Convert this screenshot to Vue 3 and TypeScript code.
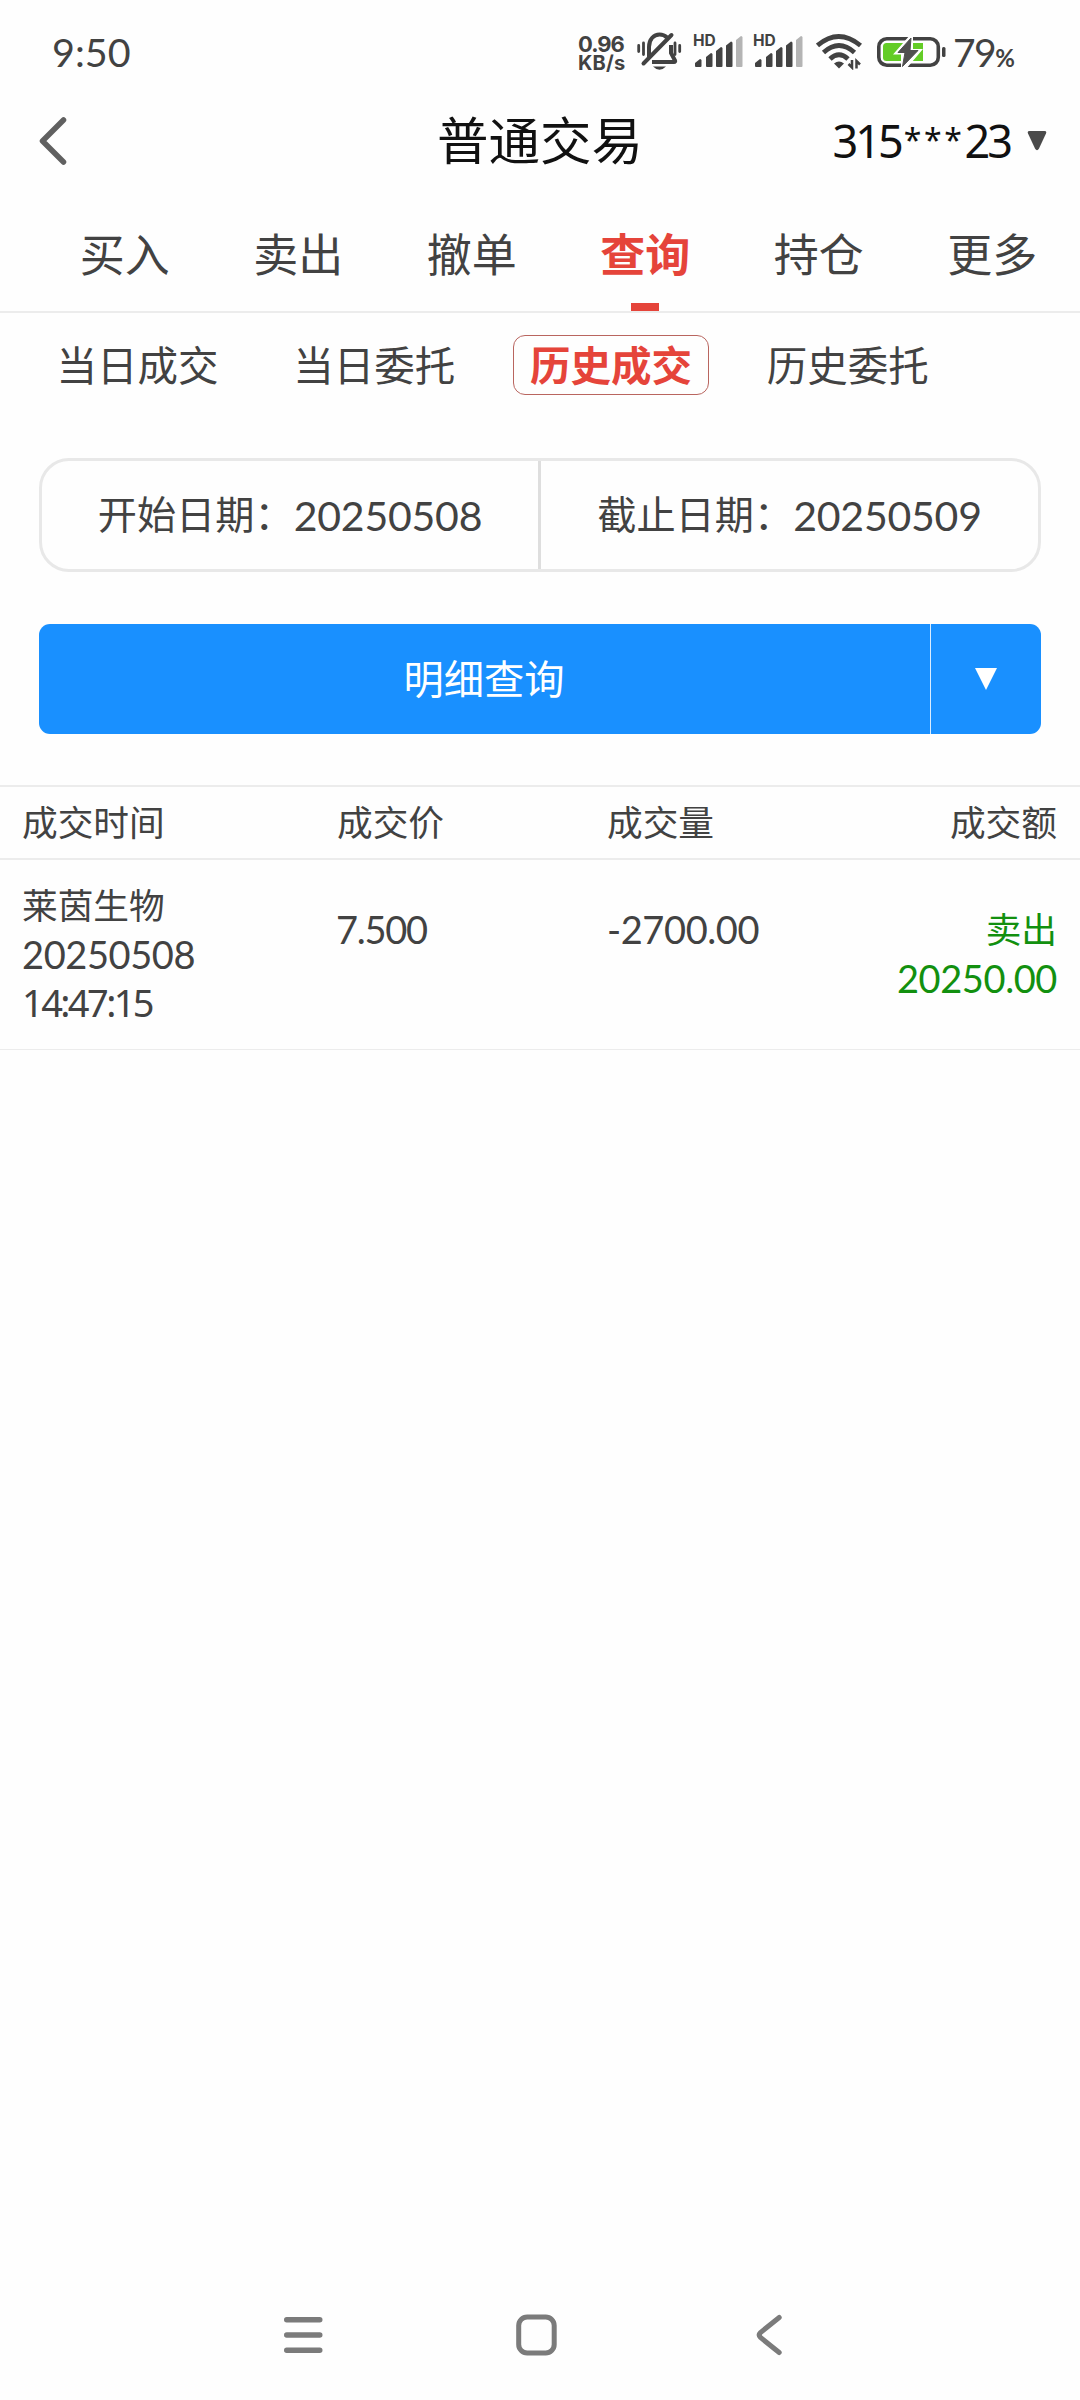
<script setup lang="ts">
interface Tab {
  label: string
  active?: boolean
}

const mainTabs: Tab[] = [
  { label: '买入' },
  { label: '卖出' },
  { label: '撤单' },
  { label: '查询', active: true },
  { label: '持仓' },
  { label: '更多' },
]

const subTabs: Tab[] = [
  { label: '当日成交' },
  { label: '当日委托' },
  { label: '历史成交', active: true },
  { label: '历史委托' },
]

const dates = [
  { label: '开始日期：', value: '20250508' },
  { label: '截止日期：', value: '20250509' },
]

const trades = [
  {
    name: '莱茵生物',
    date: '20250508',
    time: '14:47:15',
    price: '7.500',
    volume: '-2700.00',
    side: '卖出',
    amount: '20250.00',
  },
]

const bars = [
  { x: 2, top: 23, cut: 4 },
  { x: 13, top: 17, cut: 4 },
  { x: 23, top: 11, cut: 4 },
  { x: 33, top: 5.5, cut: 4 },
  { x: 43, top: 0, cut: 4 },
]

function barPath(b: { x: number; top: number; cut: number }): string {
  const right = b.x + 6.5
  return `M${b.x} ${b.top + b.cut}L${right - 1.5} ${b.top}Q${right} ${b.top} ${right} ${b.top + 1.5}V30Q${right} 31 ${right - 1} 31H${b.x + 1}Q${b.x} 31 ${b.x} 30Z`
}
</script>

<template>
  <div class="screen">
    <header class="status">
      <span class="clock">9:50</span>
      <span class="speed"><span class="rate">0.96</span><span class="unit">KB/s</span></span>
      <svg class="bell" width="56" height="40" viewBox="0 0 56 40" fill="none" stroke="#424242">
        <path d="M12 25V15C12 7 17 2.500 22.500 2.500C25.500 2.500 28 3.500 30 5.500" stroke-width="4" />
        <path d="M34 13V21L38 28.500C38.500 29.500 38 30 37 30H15" stroke-width="4" />
        <path d="M34.500 3L6.500 31.500" stroke-width="4" stroke-linecap="round" />
        <path d="M16 34.500H29Q22.500 41 16 34.500Z" fill="#424242" stroke="none" />
        <path d="M1.700 13.500V19.500M6.500 11V22.500M38 11V22.500M42.700 13.500V19.500" stroke-width="2.800" stroke-linecap="round" />
      </svg>
      <span v-for="n in 2" :key="n" class="signal">
        <svg width="52" height="32" viewBox="0 0 52 32">
          <path
            v-for="(b, i) in bars"
            :key="i"
            :d="barPath(b)"
            :fill="i === 4 ? '#b4b4b4' : '#424242'"
          />
        </svg>
        <span class="hd">HD</span>
      </span>
      <svg class="wifi" width="61" height="36" viewBox="0 0 61 36" fill="none" stroke="#424242" stroke-width="4.800">
        <path d="M1.500 11.500Q22.500 -6.500 44.500 11.500" />
        <path d="M7.500 18.500Q23 4.500 38.500 18.500" />
        <path d="M14 25Q23 16.500 32 25" />
        <path d="M18 29.500Q23 25.500 28 29.500L23 34.500Z" fill="#424242" stroke="none" />
        <path d="M36 26V33.500L32.500 30M40.500 34.500V27L44 30.500" stroke-width="2.500" />
      </svg>
      <svg class="battery" width="76" height="34" viewBox="0 0 76 34">
        <rect x="1.800" y="3.800" width="59.500" height="26.400" rx="8" fill="none" stroke="#424242" stroke-width="3.600" />
        <path d="M9.500 8H46V26H9.500Q6 26 6 22.500V11.500Q6 8 9.500 8Z" fill="#63cc26" />
        <path d="M33 0L16 19.500H24L24 34H29L46 14H36V0Z" fill="#fff" />
        <path d="M34 3L21 17.500H28L25.500 31.500L41 15.500H33Z" fill="#505050" stroke="#505050" stroke-width="1" />
        <rect x="65" y="12" width="3.500" height="10" rx="1.500" fill="#424242" />
      </svg>
      <span class="percent">79<small>%</small></span>
    </header>

    <div class="titlebar">
      <svg class="back" width="30" height="52" viewBox="0 0 30 52" fill="none">
        <path d="M24.500 5L3.500 26L24.500 47" stroke="#606060" stroke-width="5.500" stroke-linecap="round" stroke-linejoin="round" />
      </svg>
      <h1>普通交易</h1>
      <div class="account">
        <span class="account-no">315<i>***</i>23</span>
        <svg width="20" height="20" viewBox="0 0 20 20">
          <path d="M2.500 0H17.500Q20 0 19 2.500L12 17.500Q10 21 8 17.500L1 2.500Q0 0 2.500 0Z" fill="#4a4a4a" />
        </svg>
      </div>
    </div>

    <nav class="tabs">
      <div v-for="t in mainTabs" :key="t.label" class="tab" :class="{ active: t.active }">
        <span>{{ t.label }}</span>
      </div>
    </nav>

    <nav class="subtabs">
      <div v-for="t in subTabs" :key="t.label" class="subtab" :class="{ active: t.active }">
        <span>{{ t.label }}</span>
      </div>
    </nav>

    <section class="dates">
      <div v-for="d in dates" :key="d.label" class="date">
        <span class="date-label">{{ d.label }}</span><span class="date-value">{{ d.value }}</span>
      </div>
    </section>

    <section class="query">
      <div class="query-main">明细查询</div>
      <div class="query-more">
        <svg width="22" height="22" viewBox="0 0 22 22"><path d="M0 0H22L11 22Z" fill="#fff" /></svg>
      </div>
    </section>

    <section class="table">
      <div class="row head">
        <span>成交时间</span><span>成交价</span><span>成交量</span><span class="end">成交额</span>
      </div>
      <div v-for="r in trades" :key="r.time" class="row body">
        <div class="cell">
          <span>{{ r.name }}</span>
          <span class="num">{{ r.date }}</span>
          <span class="num time">{{ r.time }}</span>
        </div>
        <div class="cell lower"><span class="num price">{{ r.price }}</span></div>
        <div class="cell lower"><span class="num volume">{{ r.volume }}</span></div>
        <div class="cell lower end sell">
          <span>{{ r.side }}</span>
          <span class="num amount">{{ r.amount }}</span>
        </div>
      </div>
    </section>

    <footer class="navbar">
      <svg width="40" height="44" viewBox="0 0 40 44" fill="none" stroke="#7b7b7b" stroke-width="5.400" stroke-linecap="round">
        <path d="M2.700 6.700H35.800M2.700 22H35.800M2.700 37.300H35.800" />
      </svg>
      <svg width="42" height="44" viewBox="0 0 42 44" fill="none" stroke="#7b7b7b" stroke-width="5">
        <rect x="2.700" y="4" width="35.500" height="36" rx="8.500" />
      </svg>
      <svg width="28" height="44" viewBox="0 0 28 44" fill="none" stroke="#7b7b7b" stroke-width="5" stroke-linecap="round">
        <path d="M23.200 4.500L4.500 19.500Q2 22 4.500 24.500L23.200 39.500" />
      </svg>
    </footer>
  </div>
</template>

<style>
body {
  background: #fefefe;
}
</style>

<style scoped>
.screen {
  width: 1080px;
  height: 2400px;
  display: flex;
  flex-direction: column;
  background: #fefefe;
  color: #424242;
  font-family: 'Noto Sans CJK SC', sans-serif;
  overflow: hidden;
}
svg {
  display: block;
  flex: none;
}
.status {
  height: 104px;
  box-sizing: border-box;
  padding-left: 52px;
  display: flex;
  align-items: center;
  font-family: Lato, sans-serif;
  line-height: 1;
}
.clock {
  width: 526px;
  font-size: 39.500px;
}
.speed {
  width: 59px;
  padding-top: 2px;
  box-sizing: border-box;
  display: flex;
  flex-direction: column;
  font-family: Inter, sans-serif;
  font-weight: 700;
  font-size: 20px;
  line-height: 18px;
  gap: 1px;
}
.rate {
  font-size: 22px;
  letter-spacing: -1px;
}
.unit {
  letter-spacing: 0.200px;
}
.signal {
  width: 60px;
  position: relative;
}
.hd {
  position: absolute;
  left: 0;
  top: -3px;
  font-family: Inter, sans-serif;
  font-size: 15.500px;
  font-weight: 700;
}
.wifi {
  margin-left: 3px;
}
.percent {
  font-size: 39px;
  letter-spacing: -1.500px;
}
.percent small {
  font-size: 24px;
  font-weight: 700;
}
.titlebar {
  height: 86px;
  display: grid;
  grid-template-columns: 1fr 210px 1fr;
  align-items: center;
  margin-top: -6px;
  color: #111;
}
.back {
  margin-left: 38.500px;
}
h1 {
  margin: 0;
  padding-bottom: 7px;
  font-size: 51.500px;
  font-weight: 400;
  line-height: 79px;
  text-align: center;
  white-space: nowrap;
}
.account {
  display: flex;
  justify-content: flex-end;
  align-items: center;
  gap: 17px;
  padding-right: 33px;
}
.account-no {
  font-family: 'Noto Sans', sans-serif;
  font-size: 45px;
  line-height: 60px;
  letter-spacing: -3px;
}
.account-no i {
  font-style: normal;
  font-size: 32px;
  line-height: 1;
  letter-spacing: 2.600px;
  vertical-align: 6px;
  margin-left: 3px;
}
.tabs {
  height: 127px;
  padding: 0 1px 0 38px;
  border-bottom: 2px solid #ececec;
  display: flex;
}
.tab {
  flex: 1;
  display: flex;
  flex-direction: column;
  align-items: center;
  justify-content: space-between;
  font-size: 45px;
  line-height: 66px;
  padding-top: 36px;
}
.tab.active {
  color: #e5443a;
  font-weight: 700;
}
.tab.active::after {
  content: '';
  width: 28px;
  height: 8px;
  background: #e5443a;
}
.subtabs {
  height: 145px;
  box-sizing: border-box;
  padding: 22px 0 0 19px;
  display: flex;
}
.subtab {
  width: 236.800px;
  display: flex;
  justify-content: center;
}
.subtab span {
  height: 58px;
  line-height: 55px;
  padding: 0 16px;
  font-size: 40.500px;
  border: 1px solid transparent;
  border-radius: 12px;
}
.subtab.active span {
  color: #e5443a;
  font-weight: 700;
  border-color: #b9655f;
}
.dates {
  height: 108px;
  margin: 0 39px;
  border: 3px solid #e8e8e8;
  border-radius: 30px;
  display: grid;
  grid-template-columns: 496px 1fr;
}
.date {
  display: flex;
  justify-content: center;
  align-items: center;
}
.date + .date {
  border-left: 3px solid #dedede;
}
.date-label {
  font-size: 39.200px;
  padding-bottom: 6px;
}
.date-value {
  font-family: Lato, sans-serif;
  font-size: 41px;
  letter-spacing: -0.200px;
}
.query {
  height: 110px;
  margin: 52px 39px 51px;
  border-radius: 11px;
  background: #1990ff;
  color: #fff;
  font-size: 40.300px;
  display: flex;
  overflow: hidden;
}
.query-main {
  flex: 1;
  display: flex;
  align-items: center;
  justify-content: center;
  padding: 0 1px 6px 0;
}
.query-more {
  width: 110px;
  border-left: 1px solid #d8ecff;
  display: flex;
  align-items: center;
  justify-content: center;
}
.row {
  display: grid;
  grid-template-columns: 315px 270px 1fr 170px;
  padding: 0 23px 0 22px;
  font-size: 35.700px;
}
.head {
  height: 71px;
  line-height: 67px;
  border-top: 2px solid #ececec;
  border-bottom: 2px solid #ececec;
}
.body {
  height: 189px;
  border-bottom: 1px solid #ececec;
}
.cell {
  display: flex;
  flex-direction: column;
  line-height: 48.700px;
  padding-top: 20px;
}
.lower {
  padding-top: 44px;
}
.end {
  text-align: right;
}
.num {
  font-family: Lato, sans-serif;
  font-size: 38px;
  letter-spacing: -0.400px;
  transform: translateY(1px);
}
.time {
  font-family: 'Noto Sans', sans-serif;
  letter-spacing: -2.600px;
}
.price {
  letter-spacing: -1.300px;
  margin-left: -1px;
}
.sell {
  color: #12900f;
}
.navbar {
  margin-top: auto;
  height: 130px;
  padding-left: 284px;
  display: flex;
  align-items: center;
  gap: 192px;
}
.navbar svg:last-child {
  margin-left: 6px;
}
</style>
